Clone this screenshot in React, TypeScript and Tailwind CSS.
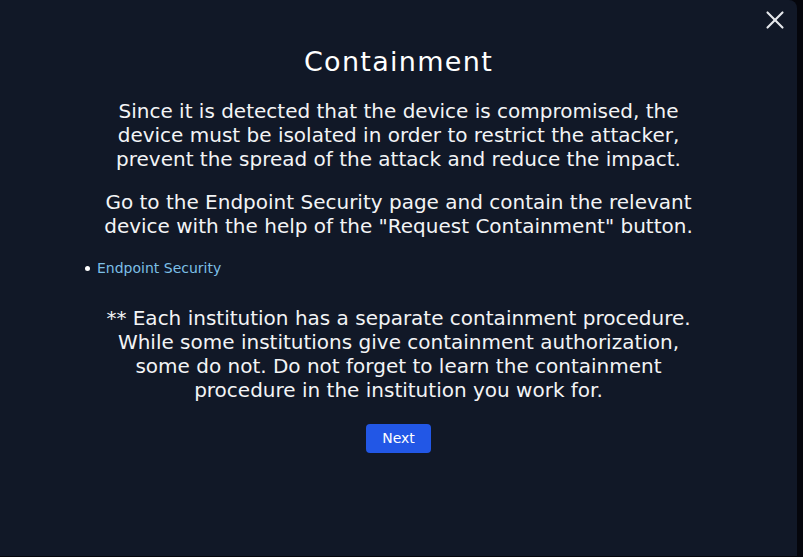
import { X } from 'lucide-react';

const font = { fontFamily: '"DejaVu Sans", sans-serif' };

export default function App() {
  return (
    <div className="w-[803px] h-[557px] bg-[#05060c] overflow-hidden" style={font}>
      {/* Modal */}
      <div className="relative w-[797px] h-[556px] bg-[#111827] rounded-tr-lg text-white">
        <button className="absolute left-[760px] top-[5px] text-gray-200">
          <X size={30} strokeWidth={1.7} />
        </button>

        <div className="flex flex-col items-center pt-[45px]">
          <h2 className="text-[27px] leading-[34px] tracking-[1.3px]">Containment</h2>

          <p className="mt-5 text-[20px] leading-6 text-center text-gray-100">
            Since it is detected that the device is compromised, the
            <br />
            device must be isolated in order to restrict the attacker,
            <br />
            prevent the spread of the attack and reduce the impact.
          </p>

          <p className="mt-[19px] text-[20px] leading-6 text-center text-gray-100">
            Go to the Endpoint Security page and contain the relevant
            <br />
            device with the help of the "Request Containment" button.
          </p>

          <ul className="self-start mt-5 pl-[85px] text-[14px] leading-5">
            <li className="flex items-center gap-[7px]">
              <span className="w-[5px] h-[5px] rounded-full bg-white" />
              <a className="text-[#7cbfe6]">Endpoint Security</a>
            </li>
          </ul>

          <p className="mt-7 text-[20px] leading-6 text-center text-gray-100">
            ** Each institution has a separate containment procedure.
            <br />
            While some institutions give containment authorization,
            <br />
            some do not. Do not forget to learn the containment
            <br />
            procedure in the institution you work for.
          </p>

          <button className="mt-[22px] h-[29px] px-4 rounded bg-[#2257e6] text-[14px] text-white">
            Next
          </button>
        </div>
      </div>
    </div>
  );
}
